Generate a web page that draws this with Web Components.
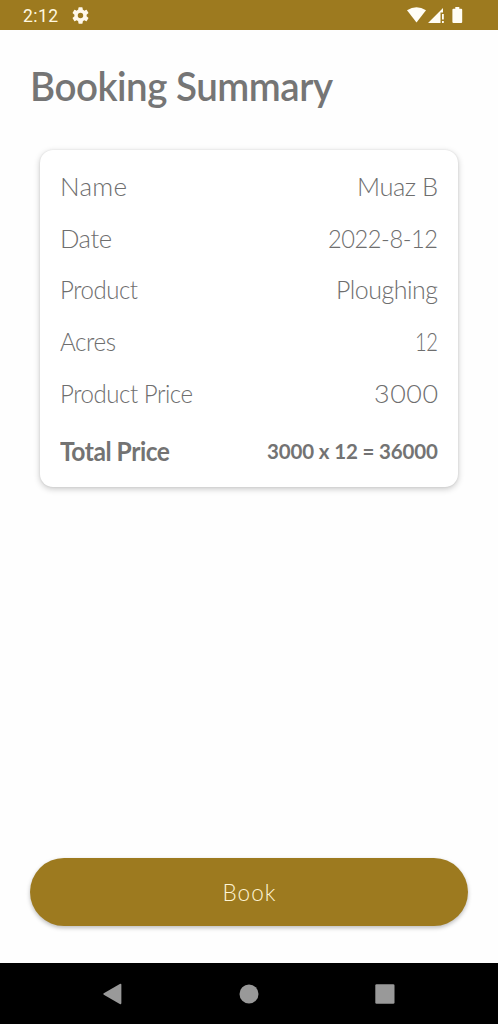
<!DOCTYPE html>
<html lang="en">
<head>
<meta charset="utf-8">
<title>Booking Summary</title>
<style>
html, body { margin: 0; height: 100%; background: #fefefe; overflow: hidden; }
</style>
</head>
<body>
<booking-screen></booking-screen>
<script>
const define = (name, html, ready) => {
  const tpl = document.createElement('template');
  tpl.innerHTML = html;
  customElements.define(name, class extends HTMLElement {
    connectedCallback() {
      if (this.shadowRoot) return;
      this.attachShadow({ mode: 'open' }).append(tpl.content.cloneNode(true));
      if (ready) ready(this);
    }
  });
};

/* Single line of text fitted to the given width: slight tracking first, then glyph width. */
define('fit-text', `
<style>
:host { display: block; flex: none; }
span { display: inline-block; white-space: nowrap; transform-origin: 0 50%; vertical-align: top; }
</style><span><slot></slot></span>`, el => {
  const target = Number(el.getAttribute('width'));
  const limit = Number(el.getAttribute('track') || 0.5);
  const span = el.shadowRoot.querySelector('span');
  const count = el.textContent.length;
  const natural = span.getBoundingClientRect().width;
  const gap = Math.max(-limit, Math.min(limit, (target - natural) / (count - 1)));
  el.style.width = target + 'px';
  span.style.letterSpacing = gap + 'px';
  span.style.transform = 'scaleX(' + target / (natural + gap * (count - 1)) + ')';
});

define('status-bar', `
<style>
:host { display: flex; align-items: center; box-sizing: border-box; height: 30px; flex: none;
  padding: 1px 34px 0 23px; background: #9d7a1f; color: #fff8e0; font: 17.5px/30px Roboto, sans-serif; }
svg { display: block; flex: none; }
.gear { margin-left: 14px; }
.end { margin-left: auto; display: flex; align-items: center; }
</style>
<fit-text width="35">2:12</fit-text>
<svg class="gear" width="17" height="17" viewBox="2 2 20 20" fill="#fff8ea"><path d="M19.14 12.94c.04-.3.06-.61.06-.94s-.02-.64-.07-.94l2.03-1.58a.49.49 0 0 0 .12-.61l-1.92-3.32a.49.49 0 0 0-.59-.22l-2.39.96a7 7 0 0 0-1.62-.94l-.36-2.54A.48.48 0 0 0 13.92 2.4h-3.84a.48.48 0 0 0-.47.41l-.36 2.54a7 7 0 0 0-1.62.94l-2.39-.96a.48.48 0 0 0-.59.22L2.74 8.87a.48.48 0 0 0 .12.61l2.03 1.58a7 7 0 0 0 0 1.88l-2.03 1.58a.49.49 0 0 0-.12.61l1.92 3.32c.12.22.37.29.59.22l2.39-.96c.5.38 1.03.7 1.62.94l.36 2.54c.05.24.24.41.48.41h3.84c.24 0 .44-.17.47-.41l.36-2.54a7 7 0 0 0 1.62-.94l2.39.96c.22.08.47 0 .59-.22l1.92-3.32a.48.48 0 0 0-.12-.61zM12 15.2a3.2 3.2 0 1 1 0-6.4 3.2 3.2 0 0 1 0 6.4z"/></svg>
<div class="end">
<svg width="58" height="18" viewBox="0 0 58 18" fill="#fffdf5">
<path d="M1 3.3Q10.500-2.700 20 3.300L10.500 15.500z"/>
<path d="M22 16L37 1V5.500H34.500V16z"/><path d="M36 7h1.800v5.500H36zM36 14h1.800v2H36z"/>
<path d="M49.300 0h4v1.800h1.900q1 0 1 1V15q0 1-1 1h-7.800q-1 0-1-1V2.800q0-1 1-1h1.900z"/>
</svg></div>`);

define('summary-row', `
<style>
:host { display: flex; align-items: center; justify-content: space-between; height: 51.75px;
  font: 300 26px/32px Lato, sans-serif; color: #6e6e6e; }
:host([total]) { height: 64px; font-weight: 700; color: #737373; }
:host([total]) ::slotted([slot=value]) { font-size: 20.5px; }
</style><slot name="label"></slot><slot name="value"></slot>`);

define('summary-card', `
<style>
:host { display: block; box-sizing: border-box; height: 337px; margin: 0 10px; padding: 10px 20px 0; border-radius: 13px;
  background: #fff; box-shadow: 0 2px 6px rgba(0,0,0,.22), 0 0 2px rgba(0,0,0,.1); }
</style><slot></slot>`);

define('book-button', `
<style>
:host { display: block; margin-top: auto; }
button { display: flex; align-items: center; justify-content: center; width: 100%; height: 68px; padding: 2px 0 0;
  border: 0; border-radius: 34px; background: #9d7a1f; color: #fff5d5;
  font: 300 22.5px/30px Lato, sans-serif; box-shadow: 0 2px 4px rgba(0,0,0,.26); }
</style><button><slot></slot></button>`);

define('nav-bar', `
<style>
:host { display: flex; justify-content: space-between; align-items: center; box-sizing: border-box; flex: none;
  height: 61px; padding: 0 103px; background: #000; }
svg { display: block; fill: #999; }
</style>
<svg width="20" height="22" viewBox="0 0 20 22"><path d="M.8 10.300L16.800 1.100q1.600-.8 1.600.8V20.100q0 1.600-1.600.8L.8 11.700q-1-.7 0-1.400z"/></svg>
<svg width="20" height="20" viewBox="0 0 20 20"><circle cx="10" cy="10" r="9.500"/></svg>
<svg width="20" height="20" viewBox="0 0 20 20"><rect x=".3" y=".3" width="19.200" height="19.400" rx="1.300"/></svg>`);

define('booking-screen', `
<style>
:host { display: flex; flex-direction: column; height: 100vh; background: #fefefe; }
main { flex: 1; display: flex; flex-direction: column; box-sizing: border-box; padding: 32px 30px 37px; }
h1 { margin: 0 0 40px; height: 48px; font: 600 40px/48px Lato, sans-serif; color: #757575; }
</style>
<status-bar></status-bar>
<main>
<h1><fit-text width="303">Booking Summary</fit-text></h1>
<summary-card>
<summary-row><fit-text slot="label" width="67">Name</fit-text><fit-text slot="value" width="81">Muaz B</fit-text></summary-row>
<summary-row><fit-text slot="label" width="52">Date</fit-text><fit-text slot="value" width="110">2022-8-12</fit-text></summary-row>
<summary-row><fit-text slot="label" width="78">Product</fit-text><fit-text slot="value" width="102">Ploughing</fit-text></summary-row>
<summary-row><fit-text slot="label" width="56">Acres</fit-text><fit-text slot="value" width="23">12</fit-text></summary-row>
<summary-row><fit-text slot="label" width="133">Product Price</fit-text><fit-text slot="value" width="64">3000</fit-text></summary-row>
<summary-row total><fit-text slot="label" width="110">Total Price</fit-text><fit-text slot="value" width="171">3000 x 12 = 36000</fit-text></summary-row>
</summary-card>
<book-button><fit-text width="53" track="2">Book</fit-text></book-button>
</main>
<nav-bar></nav-bar>`);
</script>
</body>
</html>
